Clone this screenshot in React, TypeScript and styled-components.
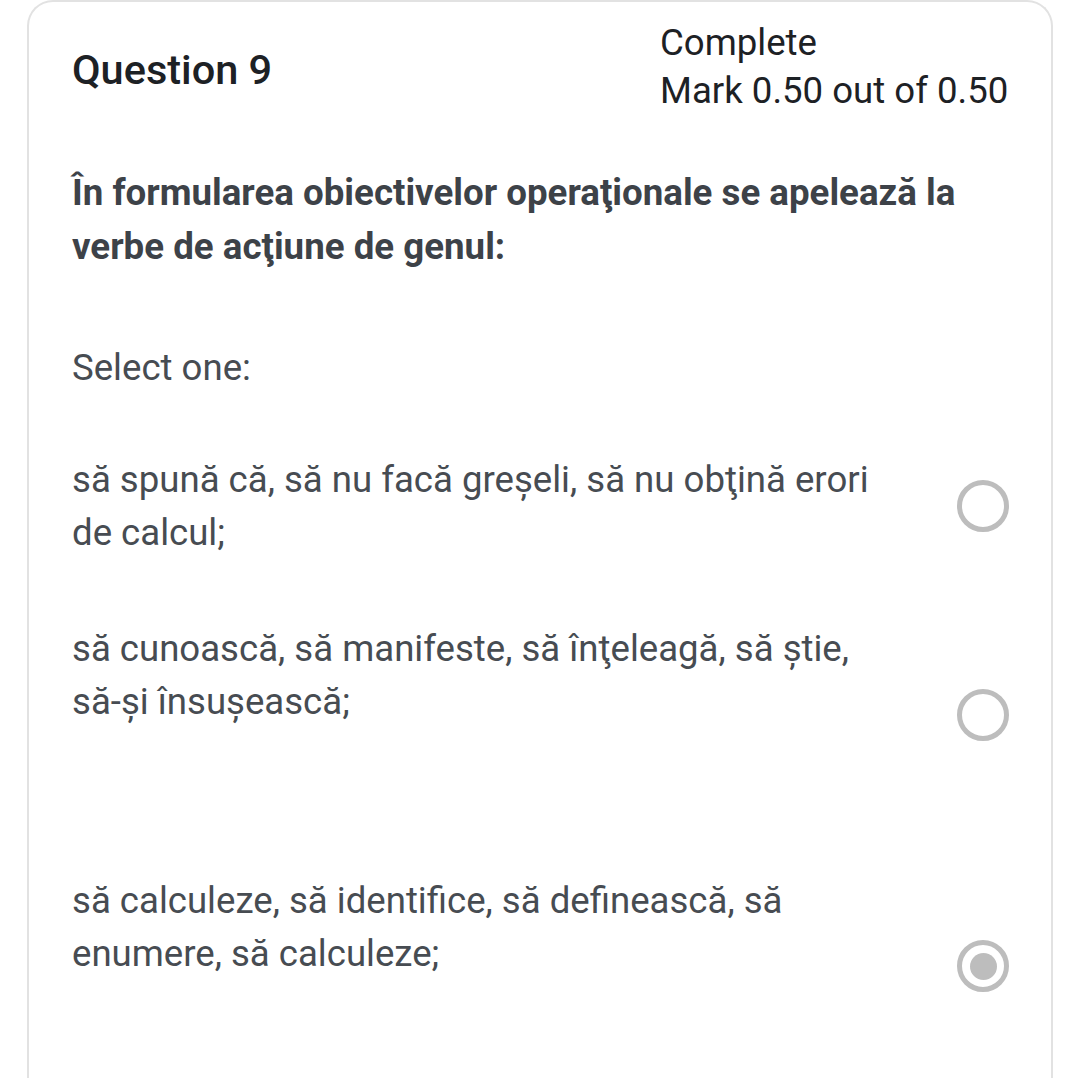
import React from "react";
import styled, { createGlobalStyle } from "styled-components";

const Global = createGlobalStyle`
  html, body { margin: 0; padding: 0; background: #ffffff; }
  body { font-family: Roboto, "Noto Sans", "Liberation Sans", sans-serif; overflow: hidden; }
`;

const Page = styled.div`
  width: 1080px;
  height: 1078px;
  overflow: hidden;
  background: #ffffff;
`;

const Card = styled.section`
  margin: 0 27px;
  min-height: 1140px;
  border: 2px solid #e2e2e2;
  border-bottom: none;
  border-radius: 26px 26px 0 0;
  padding: 17px 0 0 43px;
  box-sizing: border-box;
`;

const Header = styled.header`
  display: flex;
  align-items: center;
  justify-content: space-between;
  padding-right: 42px;
`;

const Title = styled.h2`
  margin: 5px 0 0;
  font-size: 41.5px;
  line-height: 48px;
  font-weight: 500;
  color: #1d2125;
`;

const Info = styled.div`
  width: 349px;
  font-size: 36.6px;
  line-height: 48px;
  color: #1d2125;
  white-space: nowrap;
`;

const QText = styled.p`
  margin: 51px 0 0;
  width: 910px;
  font-size: 36.7px;
  line-height: 54px;
  font-weight: 700;
  color: #3d4248;
`;

const Prompt = styled.p`
  margin: 67px 0 0;
  font-size: 36.6px;
  line-height: 54px;
  color: #474c52;
`;

const Options = styled.div`
  display: flex;
  flex-direction: column;
`;

const Option = styled.label<{ $gap: number }>`
  display: flex;
  align-items: flex-start;
  justify-content: space-between;
  margin-top: ${(p) => p.$gap}px;
  padding-right: 42px;
`;

const OptionText = styled.span`
  width: 830px;
  font-size: 36.6px;
  line-height: 53px;
  color: #474c52;
`;

const Word = styled.span`
  white-space: nowrap;
`;

const Radio = styled.span<{ $offset: number; $checked?: boolean }>`
  flex: none;
  width: 52px;
  height: 52px;
  box-sizing: border-box;
  border: 5px solid #bdbdbd;
  border-radius: 50%;
  margin-top: ${(p) => p.$offset}px;
  display: flex;
  align-items: center;
  justify-content: center;
  &::after {
    content: "";
    display: ${(p) => (p.$checked ? "block" : "none")};
    width: 27px;
    height: 27px;
    border-radius: 50%;
    background: #bdbdbd;
  }
`;

const options = [
  {
    text: <>să spună că, să nu facă greșeli, să nu obţină erori de calcul;</>,
    gap: 58,
    offset: 27,
    checked: false,
  },
  {
    text: (
      <>
        să cunoască, să manifeste, să înţeleagă, să știe, <Word>să-și</Word> însușească;
      </>
    ),
    gap: 63,
    offset: 67,
    checked: false,
  },
  {
    text: <>să calculeze, să identifice, să definească, să enumere, să calculeze;</>,
    gap: 133,
    offset: 66,
    checked: true,
  },
];

export default function App() {
  return (
    <Page>
      <Global />
      <Card>
        <Header>
          <Title>Question 9</Title>
          <Info>
            <div>Complete</div>
            <div>Mark 0.50 out of 0.50</div>
          </Info>
        </Header>
        <QText>
          În formularea obiectivelor operaţionale se apelează la verbe de acţiune de genul:
        </QText>
        <Prompt>Select one:</Prompt>
        <Options>
          {options.map((o, i) => (
            <Option key={i} $gap={o.gap}>
              <OptionText>{o.text}</OptionText>
              <Radio $offset={o.offset} $checked={o.checked} />
            </Option>
          ))}
        </Options>
      </Card>
    </Page>
  );
}
